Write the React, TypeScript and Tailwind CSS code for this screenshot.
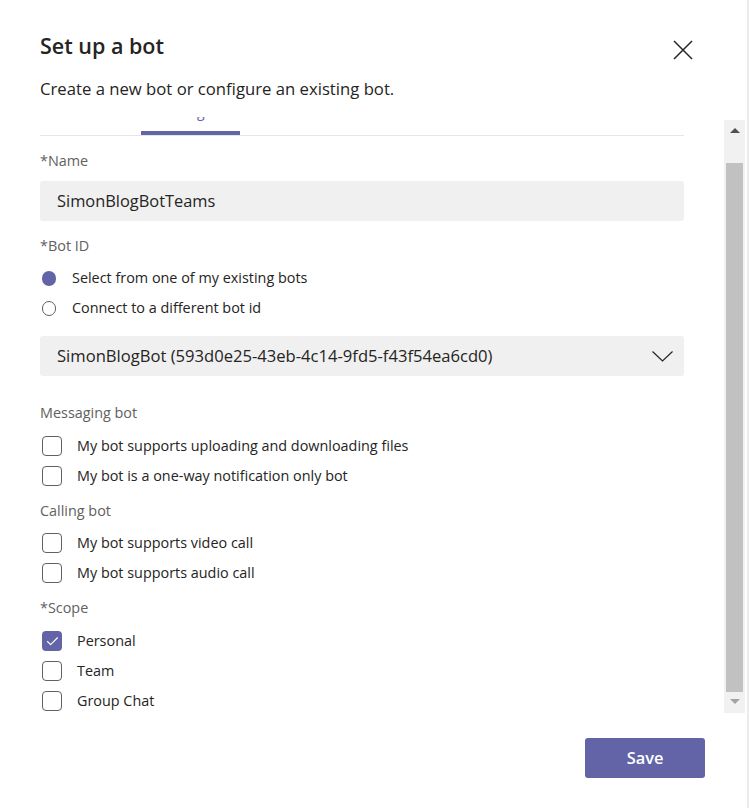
import { Check } from 'lucide-react'

const font = { fontFamily: '"Open Sans", "Noto Sans", sans-serif' }

function Label({ text, className = '' }: { text: string; className?: string }) {
  return <div className={`h-[20px] text-[14.4px] leading-[20px] text-[#616161] ${className}`}>{text}</div>
}

function Radio({ label, checked }: { label: string; checked?: boolean }) {
  return (
    <div className="flex h-[30px] items-center">
      <div className="ml-[2px] w-[14px] flex justify-center">
        {checked ? (
          <div className="w-[15px] h-[15px] rounded-full bg-[#6264a7]" />
        ) : (
          <div className="w-[15px] h-[15px] rounded-full border border-[#616161]" />
        )}
      </div>
      <span className="ml-[16px] text-[14.4px] text-[#252423]">{label}</span>
    </div>
  )
}

function Checkbox({ label, checked }: { label: string; checked?: boolean }) {
  return (
    <div className="flex h-[30px] items-center">
      {checked ? (
        <div className="ml-[2px] w-[20px] h-[20px] rounded-[4px] bg-[#6264a7] flex items-center justify-center">
          <Check size={15} strokeWidth={1.8} className="text-white" />
        </div>
      ) : (
        <div className="ml-[2px] w-[20px] h-[20px] rounded-[4px] border border-[#616161]" />
      )}
      <span className="ml-[15px] text-[14.4px] text-[#252423]">{label}</span>
    </div>
  )
}

export default function App() {
  return (
    <div className="w-[749px] h-[808px] bg-white flex overflow-hidden" style={font}>
      <div className="w-[747px] flex flex-col">
        {/* header */}
        <div className="flex justify-between pl-[40px] pr-[54px] pt-[32px]">
          <div>
            <h1 className="h-[28px] text-[21.5px] leading-[28px] font-semibold text-[#252423]">Set up a bot</h1>
            <p className="mt-[17px] h-[24px] text-[16.7px] leading-[24px] text-[#252423]">
              Create a new bot or configure an existing bot.
            </p>
          </div>
          <svg width="20" height="20" viewBox="0 0 20 20" className="mt-[8px]">
            <path d="M1 1 L19 19 M19 1 L1 19" stroke="#252423" strokeWidth="1.5" fill="none" />
          </svg>
        </div>

        {/* scroll area */}
        <div className="mt-[16px] h-[599px] flex overflow-hidden">
          <div className="ml-[40px] w-[644px] flex flex-col">
            <div className="-mt-[15px] h-[34px] flex border-b border-[#e6e6e6] text-[14px] text-[#6264a7]">
              <div className="w-[101px] flex flex-col">
                <div className="h-[20px] leading-[20px] text-center">Create bot</div>
              </div>
              <div className="w-[99px] flex flex-col">
                <div className="h-[20px] leading-[20px] pl-[22px]">Configure</div>
                <div className="mt-[9px] h-[4px] bg-[#6264a7]" />
              </div>
            </div>

            <Label text="*Name" className="mt-[15px]" />
            <div className="mt-[10px] h-[40px] rounded-[3px] bg-[#f0f0f0] flex items-center pl-[17px] text-[16.4px] text-[#252423]">
              SimonBlogBotTeams
            </div>

            <Label text="*Bot ID" className="mt-[15px]" />
            <div className="mt-[7px]">
              <Radio label="Select from one of my existing bots" checked />
              <Radio label="Connect to a different bot id" />
            </div>

            <div className="mt-[13px] h-[40px] rounded-[3px] bg-[#f0f0f0] flex items-center justify-between pl-[17px] pr-[11px] text-[16.6px] text-[#252423]">
              <span>SimonBlogBot (593d0e25-43eb-4c14-9fd5-f43f54ea6cd0)</span>
              <svg width="21" height="11" viewBox="0 0 21 11">
                <path d="M0.5 0.5 L10.5 10 L20.5 0.5" stroke="#252423" strokeWidth="1.2" fill="none" />
              </svg>
            </div>

            <Label text="Messaging bot" className="mt-[27px]" />
            <div className="mt-[8px]">
              <Checkbox label="My bot supports uploading and downloading files" />
              <Checkbox label="My bot is a one-way notification only bot" />
            </div>

            <Label text="Calling bot" className="mt-[10px]" />
            <div className="mt-[7px]">
              <Checkbox label="My bot supports video call" />
              <Checkbox label="My bot supports audio call" />
            </div>

            <Label text="*Scope" className="mt-[10px]" />
            <div className="mt-[8px]">
              <Checkbox label="Personal" checked />
              <Checkbox label="Team" />
              <Checkbox label="Group Chat" />
            </div>
          </div>

          {/* scrollbar */}
          <div className="ml-[40px] mt-[3px] h-[593px] w-[21px] bg-[#f1f1f1] flex flex-col">
            <div className="h-[43px] flex justify-center pt-[8px]">
              <div className="w-0 h-0 border-l-[5px] border-r-[5px] border-b-[5px] border-l-transparent border-r-transparent border-b-[#505050]" />
            </div>
            <div className="mx-[2px] h-[529px] bg-[#c1c1c1]" />
            <div className="h-[21px] flex justify-center pt-[7px]">
              <div className="w-0 h-0 border-l-[5px] border-r-[5px] border-t-[5px] border-l-transparent border-r-transparent border-t-[#a3a3a3]" />
            </div>
          </div>
        </div>

        {/* footer */}
        <div className="mt-[22px] flex justify-end pr-[42px]">
          <button className="w-[120px] h-[40px] rounded-[3px] bg-[#6264a7] text-white text-[16.4px] font-semibold">
            Save
          </button>
        </div>
      </div>
      <div className="w-[2px] bg-[#ebebeb]" />
    </div>
  )
}
